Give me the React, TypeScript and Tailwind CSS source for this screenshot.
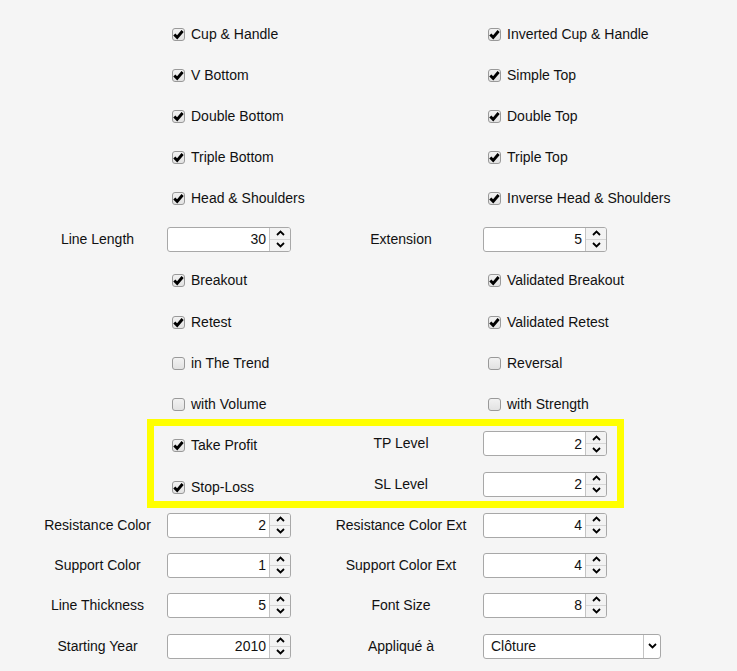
import React from "react";

type Side = { label: string; checked: boolean };

const checkRows: { left: Side; right: Side; h: string }[] = [
  { left: { label: "Cup & Handle", checked: true }, right: { label: "Inverted Cup & Handle", checked: true }, h: "h-[41px]" },
  { left: { label: "V Bottom", checked: true }, right: { label: "Simple Top", checked: true }, h: "h-[41px]" },
  { left: { label: "Double Bottom", checked: true }, right: { label: "Double Top", checked: true }, h: "h-[41px]" },
  { left: { label: "Triple Bottom", checked: true }, right: { label: "Triple Top", checked: true }, h: "h-[41px]" },
  { left: { label: "Head & Shoulders", checked: true }, right: { label: "Inverse Head & Shoulders", checked: true }, h: "h-[41px]" },
];

const checkRows2: { left: Side; right: Side; h: string }[] = [
  { left: { label: "Breakout", checked: true }, right: { label: "Validated Breakout", checked: true }, h: "h-[42px]" },
  { left: { label: "Retest", checked: true }, right: { label: "Validated Retest", checked: true }, h: "h-[42px]" },
  { left: { label: "in The Trend", checked: false }, right: { label: "Reversal", checked: false }, h: "h-[41px]" },
  { left: { label: "with Volume", checked: false }, right: { label: "with Strength", checked: false }, h: "h-[35px] pt-[5px]" },
];

const bottomRows = [
  { l: "Resistance Color", lv: "2", r: "Resistance Color Ext", rv: "4", h: "h-[37px] pb-[3px]" },
  { l: "Support Color", lv: "1", r: "Support Color Ext", rv: "4", h: "h-[40px]" },
  { l: "Line Thickness", lv: "5", r: "Font Size", rv: "8", h: "h-[40px]" },
];

function Checkbox({ checked }: { checked: boolean }) {
  return (
    <span className="w-[13px] h-[13px] shrink-0 rounded-[3px] border border-[#999] bg-gradient-to-b from-[#f2f2f2] to-[#e2e2e2] flex items-center justify-center">
      {checked && (
        <svg width="11" height="11" viewBox="0 0 11 11">
          <path d="M1.3 5.4 L4.2 8.4 L9.6 2.0" fill="none" stroke="#000" strokeWidth="2.9" />
        </svg>
      )}
    </span>
  );
}

function CheckItem({ item }: { item: Side }) {
  return (
    <div className="flex items-center gap-[6px]">
      <Checkbox checked={item.checked} />
      <span>{item.label}</span>
    </div>
  );
}

function Spin({ value }: { value: string }) {
  return (
    <div className="w-[124px] h-[25px] flex rounded-[3px] border border-[#a8a8a8] bg-white overflow-hidden">
      <div className="flex-1 flex items-center justify-end pr-[3px] leading-none">{value}</div>
      <div className="w-[21px] flex flex-col border-l border-[#c4c4c4] bg-[#f3f3f3]">
        <div className="flex-1 flex items-center justify-center border-b border-[#d6d6d6]">
          <svg width="9" height="6" viewBox="0 0 9 6">
            <path d="M1 5 L4.5 1.5 L8 5" fill="none" stroke="#000" strokeWidth="1.8" />
          </svg>
        </div>
        <div className="flex-1 flex items-center justify-center">
          <svg width="9" height="6" viewBox="0 0 9 6">
            <path d="M1 1 L4.5 4.5 L8 1" fill="none" stroke="#000" strokeWidth="1.8" />
          </svg>
        </div>
      </div>
    </div>
  );
}

function Select({ value }: { value: string }) {
  return (
    <div className="w-[178px] h-[25px] flex rounded-[3px] border border-[#a8a8a8] bg-white overflow-hidden">
      <div className="flex-1 flex items-center pl-[7px]">{value}</div>
      <div className="w-[17px] flex items-center justify-center border-l border-[#c4c4c4]">
        <svg width="9" height="6" viewBox="0 0 9 6">
          <path d="M1 1 L4.5 4.5 L8 1" fill="none" stroke="#000" strokeWidth="1.8" />
        </svg>
      </div>
    </div>
  );
}

export default function App() {
  return (
    <div className="w-[737px] h-[671px] overflow-hidden bg-[#f5f5f5] text-[14px] text-[#111] font-['Liberation_Sans',Arial,sans-serif] pt-[14px]">
      {checkRows.map((r) => (
        <div key={r.left.label} className={`grid grid-cols-[167px_316px_1fr] items-center ${r.h}`}>
          <div />
          <div className="pl-[5px]"><CheckItem item={r.left} /></div>
          <div className="pl-[5px]"><CheckItem item={r.right} /></div>
        </div>
      ))}

      <div className="grid grid-cols-[167px_152px_164px_1fr] items-center h-[40px]">
        <div className="pl-[28px] text-center">Line Length</div>
        <Spin value="30" />
        <div className="text-center">Extension</div>
        <Spin value="5" />
      </div>

      {checkRows2.map((r) => (
        <div key={r.left.label} className={`grid grid-cols-[167px_316px_1fr] items-center ${r.h}`}>
          <div />
          <div className="pl-[5px]"><CheckItem item={r.left} /></div>
          <div className="pl-[5px]"><CheckItem item={r.right} /></div>
        </div>
      ))}

      <div className="ml-[147px] w-[477px] border-[7px] border-[#ffff00]">
        <div className="grid grid-cols-[165px_164px_1fr] items-center h-[35px]">
          <div className="pl-[18px] pt-[3px]"><CheckItem item={{ label: "Take Profit", checked: true }} /></div>
          <div className="text-center">TP Level</div>
          <Spin value="2" />
        </div>
        <div className="grid grid-cols-[165px_164px_1fr] items-center h-[40px] pt-[6px]">
          <div className="pl-[18px] pt-[6px]"><CheckItem item={{ label: "Stop-Loss", checked: true }} /></div>
          <div className="text-center">SL Level</div>
          <Spin value="2" />
        </div>
      </div>

      {bottomRows.map((r) => (
        <div key={r.l} className={`grid grid-cols-[167px_152px_164px_1fr] items-center ${r.h}`}>
          <div className="pl-[28px] text-center">{r.l}</div>
          <Spin value={r.lv} />
          <div className="text-center">{r.r}</div>
          <Spin value={r.rv} />
        </div>
      ))}

      <div className="grid grid-cols-[167px_152px_164px_1fr] items-center h-[42px]">
        <div className="pl-[28px] text-center">Starting Year</div>
        <Spin value="2010" />
        <div className="text-center">Appliqué à</div>
        <Select value="Clôture" />
      </div>
    </div>
  );
}
